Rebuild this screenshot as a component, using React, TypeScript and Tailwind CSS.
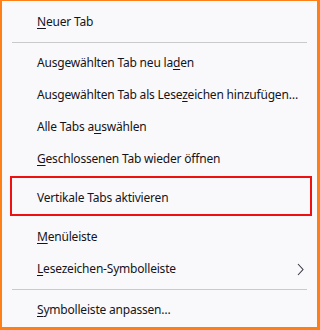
import React from 'react';

type Item = { before: string; key?: string; after?: string; submenu?: boolean };

const Label: React.FC<{ item: Item }> = ({ item }) => (
    <span className="whitespace-nowrap">
        {item.before}
        {item.key && <span className="underline underline-offset-2">{item.key}</span>}
        {item.after}
    </span>
);

const Row: React.FC<{ item: Item }> = ({ item }) => (
    <div className="h-8 flex items-center pl-[35px] pr-[13px]">
        <div className="flex-1"><Label item={item} /></div>
        {item.submenu && (
            <svg width="7" height="13" viewBox="0 0 7 13">
                <path d="M1 1 L6 6.5 L1 12" fill="none" stroke="#3a3944" strokeWidth="1.1" />
            </svg>
        )}
    </div>
);

const Separator = () => (
    <div className="h-[9px] flex items-center px-[10px]">
        <div className="h-px w-full bg-[#c9c9ce]" />
    </div>
);

export default function App() {
    return (
        <div
            className="w-[320px] h-[330px] bg-[#f9f9fb] border-l-2 border-t border-r-[3px] border-b-[3px] border-[#ff7f17] text-[12px] tracking-[-0.2px] text-[#15141a] pt-[5px] overflow-hidden"
            style={{ fontFamily: '"Noto Sans", "Open Sans", sans-serif' }}
        >
            <Row item={{ before: '', key: 'N', after: 'euer Tab' }} />
            <Separator />
            <Row item={{ before: 'Ausgewählten Tab neu la', key: 'd', after: 'en' }} />
            <Row item={{ before: 'Ausgewählten Tab als Lese', key: 'z', after: 'eichen hinzufügen…' }} />
            <Row item={{ before: 'Alle Tabs a', key: 'u', after: 'swählen' }} />
            <Row item={{ before: '', key: 'G', after: 'eschlossenen Tab wieder öffnen' }} />
            <div className="mt-[1px] mb-[5px] ml-[8px] mr-[5px] h-10 border-2 border-[#ee1111] flex items-center pl-[25px] pt-[3px]">
                Vertikale Tabs aktivieren
            </div>
            <Row item={{ before: '', key: 'M', after: 'enüleiste' }} />
            <Row item={{ before: '', key: 'L', after: 'esezeichen-Symbolleiste', submenu: true }} />
            <Separator />
            <Row item={{ before: '', key: 'S', after: 'ymbolleiste anpassen…' }} />
        </div>
    );
}
